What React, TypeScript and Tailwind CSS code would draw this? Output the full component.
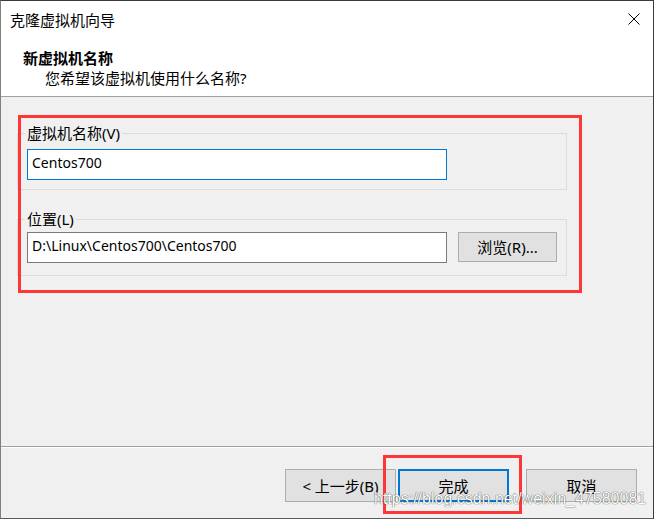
import React from 'react';

const font = "font-['Noto_Sans','Noto_Sans_CJK_SC',sans-serif]";

function CloseIcon() {
  return (
    <svg width="12" height="12" viewBox="0 0 12 12" className="block">
      <path d="M0.5 0.5 L11.5 11.5 M11.5 0.5 L0.5 11.5" stroke="#000" strokeWidth="1" fill="none" />
    </svg>
  );
}

function Button({ children, primary }: { children: React.ReactNode; primary?: boolean }) {
  return (
    <button
      className={
        primary
          ? 'w-[111px] h-[33px] bg-[#e1e1e1] border-2 border-[#0078d7] text-[15px] leading-5 text-black'
          : 'w-[111px] h-[33px] bg-[#e1e1e1] border border-[#adadad] text-[15px] leading-5 text-black'
      }
    >
      {children}
    </button>
  );
}

export default function App() {
  const [name, setName] = React.useState('Centos700');
  const [location, setLocation] = React.useState('D:\\Linux\\Centos700\\Centos700');

  return (
    <div className={`relative w-[655px] h-[519px] bg-white ${font} text-black`}>
      <div className="w-[654px] h-[519px] flex flex-col border-t border-r border-t-[#3c3c3c] border-r-[#3c3c3c] border-l border-b border-l-[#7f7f7f] border-b-[#5a5a5a]">
        {/* header */}
        <div className="h-[96px] bg-white border-b border-[#a0a0a0] flex flex-col">
          <div className="flex justify-between items-start pl-[9px] pr-[13px] pt-[9px]">
            <span className="text-[15px] leading-5">克隆虚拟机向导</span>
            <div className="mt-[3px]">
              <CloseIcon />
            </div>
          </div>
          <div className="pl-[22px] mt-[18px] text-[15px] leading-5 font-bold">新虚拟机名称</div>
          <div className="pl-[44px] text-[15px] leading-5">您希望该虚拟机使用什么名称?</div>
        </div>

        {/* body */}
        <div className="flex-1 bg-[#f0f0f0] pl-[16px] pt-[27px]">
          <fieldset className="w-[550px] border border-[#dcdcdc] pb-[9px]">
            <legend className="ml-[7px] px-[2px] text-[15px] leading-[18px]">虚拟机名称(V)</legend>
            <input
              value={name}
              onChange={(e) => setName(e.target.value)}
              className="block ml-[9px] mt-[7px] w-[420px] h-[31px] bg-white border border-[#0078d7] pl-[4px] pb-[5px] text-[14px] outline-none"
            />
          </fieldset>

          <fieldset className="w-[550px] mt-[20px] border border-[#dcdcdc] pb-[12px]">
            <legend className="ml-[7px] px-[2px] text-[15px] leading-[18px]">位置(L)</legend>
            <div className="flex items-start gap-[11px] ml-[9px] mt-[4px]">
              <input
                value={location}
                onChange={(e) => setLocation(e.target.value)}
                className="w-[420px] h-[31px] bg-white border border-[#7a7a7a] pl-[4px] pb-[5px] text-[14px] outline-none"
              />
              <button className="w-[99px] h-[30px] bg-[#e1e1e1] border border-[#adadad] text-[15px] leading-5">
                浏览(R)...
              </button>
            </div>
          </fieldset>
        </div>

        {/* footer */}
        <div className="h-[72px] bg-[#f0f0f0] flex flex-col">
          <div className="h-px bg-[#a0a0a0]" />
          <div className="h-px bg-white" />
          <div className="flex justify-end pt-[21px] pr-[16px]">
            <Button>&lt; 上一步(B)</Button>
            <div className="w-[2px]" />
            <Button primary>完成</Button>
            <div className="w-[17px]" />
            <Button>取消</Button>
          </div>
        </div>
      </div>

      {/* red annotation frames */}
      <div className="absolute left-[18px] top-[115px] w-[564px] h-[178px] border-[3px] border-[#ff3636] pointer-events-none" />
      <div className="absolute left-[383px] top-[455px] w-[139px] h-[59px] border-[3px] border-[#ff3636] pointer-events-none" />

      {/* watermark */}
      <div className="absolute left-[374px] top-[490px] font-['Liberation_Sans',Arial,sans-serif] text-[16px] leading-[18px] text-white [text-shadow:0_0_1px_rgba(0,0,0,0.7),0_0_1px_rgba(0,0,0,0.4)] pointer-events-none whitespace-nowrap">
        https://blog.csdn.net/weixin_47580081
      </div>
    </div>
  );
}
